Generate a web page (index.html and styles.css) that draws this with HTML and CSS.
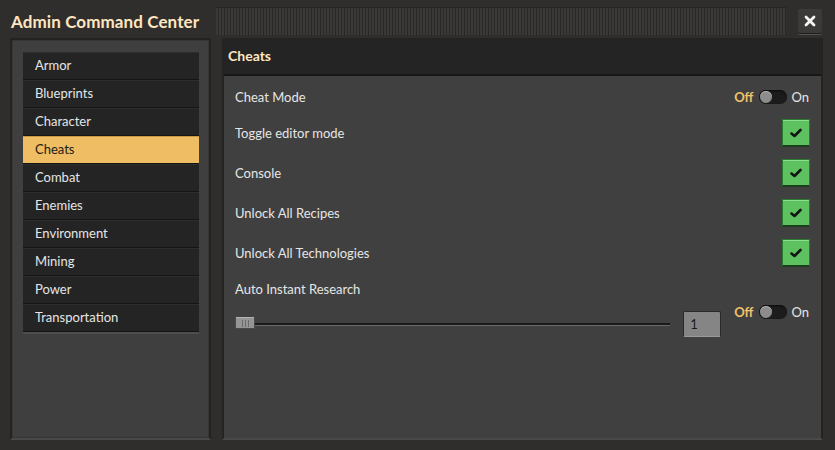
FILE: index.html
```html
<!DOCTYPE html>
<html lang="en">
<head>
    <meta charset="UTF-8">
    <title>Admin Command Center</title>
    <link rel="stylesheet" href="styles.css">
</head>
<body>
    <div class="window">
        <div class="titlebar">
            <h1 class="title">Admin Command Center</h1>
            <div class="drag-handle"></div>
            <button class="close-btn"><svg width="12" height="12" viewBox="0 0 12 12"><path d="M2 2 L10 10 M10 2 L2 10" stroke="#f4f4f4" stroke-width="2.8" stroke-linecap="round"/></svg></button>
        </div>

        <div class="main">
            <div class="side-panel">
                <ul class="tab-list">
                    <li>Armor</li>
                    <li>Blueprints</li>
                    <li>Character</li>
                    <li class="selected">Cheats</li>
                    <li>Combat</li>
                    <li>Enemies</li>
                    <li>Environment</li>
                    <li>Mining</li>
                    <li>Power</li>
                    <li>Transportation</li>
                </ul>
            </div>

            <div class="content-panel">
                <div class="content-header">Cheats</div>
                <div class="content-body">
                    <div class="row row-first">
                        <span class="label">Cheat Mode</span>
                        <div class="switch">
                            <span class="off">Off</span>
                            <span class="track"><span class="knob"></span></span>
                            <span class="on">On</span>
                        </div>
                    </div>
                    <div class="row">
                        <span class="label">Toggle editor mode</span>
                        <span class="checkbox"><svg width="12" height="10" viewBox="0 0 12 10"><path d="M1.5 5.5 L4.5 8 L10.5 2" fill="none" stroke="#141414" stroke-width="2.6" stroke-linecap="round" stroke-linejoin="round"/></svg></span>
                    </div>
                    <div class="row">
                        <span class="label">Console</span>
                        <span class="checkbox"><svg width="12" height="10" viewBox="0 0 12 10"><path d="M1.5 5.5 L4.5 8 L10.5 2" fill="none" stroke="#141414" stroke-width="2.6" stroke-linecap="round" stroke-linejoin="round"/></svg></span>
                    </div>
                    <div class="row">
                        <span class="label">Unlock All Recipes</span>
                        <span class="checkbox"><svg width="12" height="10" viewBox="0 0 12 10"><path d="M1.5 5.5 L4.5 8 L10.5 2" fill="none" stroke="#141414" stroke-width="2.6" stroke-linecap="round" stroke-linejoin="round"/></svg></span>
                    </div>
                    <div class="row">
                        <span class="label">Unlock All Technologies</span>
                        <span class="checkbox"><svg width="12" height="10" viewBox="0 0 12 10"><path d="M1.5 5.5 L4.5 8 L10.5 2" fill="none" stroke="#141414" stroke-width="2.6" stroke-linecap="round" stroke-linejoin="round"/></svg></span>
                    </div>

                    <div class="research-label">Auto Instant Research</div>
                    <div class="slider-row">
                        <div class="slider">
                            <span class="slider-thumb"></span>
                        </div>
                        <div class="number-box">1</div>
                        <div class="switch">
                            <span class="off">Off</span>
                            <span class="track"><span class="knob"></span></span>
                            <span class="on">On</span>
                        </div>
                    </div>
                </div>
            </div>
        </div>
    </div>
</body>
</html>
```

FILE: styles.css
```css
body {
    margin: 0;
    padding: 0;
    background: #2f2e2d;
    font-family: 'Lato', 'Open Sans', sans-serif;
    color: #e6e6e6;
}
.window {
    width: 835px;
    height: 450px;
    box-sizing: border-box;
    padding: 4px 12px 0 10px;
    background: #2f2e2d;
}
.titlebar {
    display: flex;
    align-items: center;
    height: 34px;
}
.title {
    margin: 0 0 0 1px;
    font-size: 17px;
    font-weight: bold;
    color: #ffe6c0;
    white-space: nowrap;
    letter-spacing: 0.1px;
}
.drag-handle {
    flex: 1;
    height: 27px;
    margin: 0 12px 0 17px;
    background: repeating-linear-gradient(90deg, #3a3938 0 2px, #2a2928 2px 3px);
    border-top: 1px solid #262524;
}
.close-btn {
    display: flex;
    align-items: center;
    justify-content: center;
    width: 24px;
    height: 25px;
    margin-right: 1px;
    padding: 0;
    border: none;
    border-radius: 2px;
    background: #3b3a39;
    box-shadow: inset 0 -1px 0 #1f1e1d, 0 1px 0 #545352;
}
.main {
    display: flex;
    gap: 11px;
    height: 402px;
}
.side-panel {
    width: 201px;
    box-sizing: border-box;
    background: #3f3f3f;
    border: 2px solid #242322;
    border-bottom-color: #4a4948;
    box-shadow: inset 0 0 0 1px #363636;
    padding: 12px 10px 0 11px;
}
.tab-list {
    list-style: none;
    margin: 0;
    padding: 0;
    border-bottom: 2px solid #4e4e4e;
}
.tab-list li {
    height: 28px;
    box-sizing: border-box;
    padding-left: 12px;
    line-height: 27px;
    font-size: 13px;
    background: #242424;
    border-bottom: 1px solid #141414;
    box-shadow: inset 0 1px 0 #2e2e2e;
}
.tab-list li.selected {
    background: #efbd64;
    color: #1e1a12;
    box-shadow: inset 0 1px 0 #c89a48;
}
.content-panel {
    flex: 1;
    display: flex;
    flex-direction: column;
    border: 2px solid #242322;
    border-bottom-color: #4a4948;
    background: #404040;
}
.content-header {
    height: 34px;
    line-height: 31px;
    padding-left: 4px;
    background: #242424;
    border-bottom: 2px solid #161616;
    font-size: 14px;
    font-weight: bold;
    color: #ffe6c0;
}
.content-body {
    flex: 1;
    padding: 7px 11px 0 11px;
}
.row {
    display: flex;
    align-items: center;
    justify-content: space-between;
    height: 40px;
}
.row-first {
    height: 28px;
    margin-bottom: 2px;
}
.label {
    font-size: 13px;
}
.switch {
    display: flex;
    align-items: center;
    gap: 6px;
    font-size: 13px;
    padding-right: 1px;
}
.switch .off {
    color: #f1c36a;
    font-weight: bold;
}
.switch .on {
    color: #e6e6e6;
    margin-left: -2px;
}
.track {
    display: flex;
    align-items: center;
    width: 28px;
    height: 14px;
    box-sizing: border-box;
    border-radius: 7px;
    background: #1c1c1c;
    box-shadow: inset 0 1px 2px #0a0a0a;
    padding-left: 1px;
}
.knob {
    width: 12px;
    height: 12px;
    border-radius: 50%;
    background: #8c8c8c;
    box-shadow: inset 0 1px 0 #b0b0b0;
}
.checkbox {
    display: flex;
    align-items: center;
    justify-content: center;
    width: 28px;
    height: 28px;
    box-sizing: border-box;
    background: #5ec160;
    border: 1px solid #2f7a33;
    border-bottom: 2px solid #1b3d1d;
    box-shadow: inset 0 1px 0 #8ade8c;
}
.research-label {
    font-size: 13px;
    height: 20px;
    line-height: 20px;
    margin-top: 6px;
}
.slider-row {
    display: flex;
    align-items: flex-start;
    margin-top: 5px;
}
.slider {
    flex: 1;
    position: relative;
    height: 26px;
    margin-top: 7px;
    background: linear-gradient(#1a1a1a, #1a1a1a) 0 12px / 100% 2px no-repeat,
                linear-gradient(#6a6a6a, #6a6a6a) 0 14px / 100% 1px no-repeat;
}
.slider-thumb {
    position: absolute;
    left: 0;
    top: 6px;
    width: 20px;
    height: 12px;
    box-sizing: border-box;
    border: 1px solid #4a4a4a;
    border-top-color: #b4b4b4;
    border-radius: 2px;
    background: repeating-linear-gradient(90deg, #6a6a6a 0 1px, transparent 1px 3px) 6px 2px / 7px 7px no-repeat,
                #959595;
}
.number-box {
    width: 38px;
    height: 26px;
    box-sizing: border-box;
    margin: 7px 13px 0 13px;
    padding-left: 6px;
    line-height: 24px;
    font-size: 13px;
    color: #1a1a1a;
    background: #858585;
    border: 1px solid #2a2a2a;
    border-bottom-color: #9a9a9a;
    border-radius: 2px;
}
```
